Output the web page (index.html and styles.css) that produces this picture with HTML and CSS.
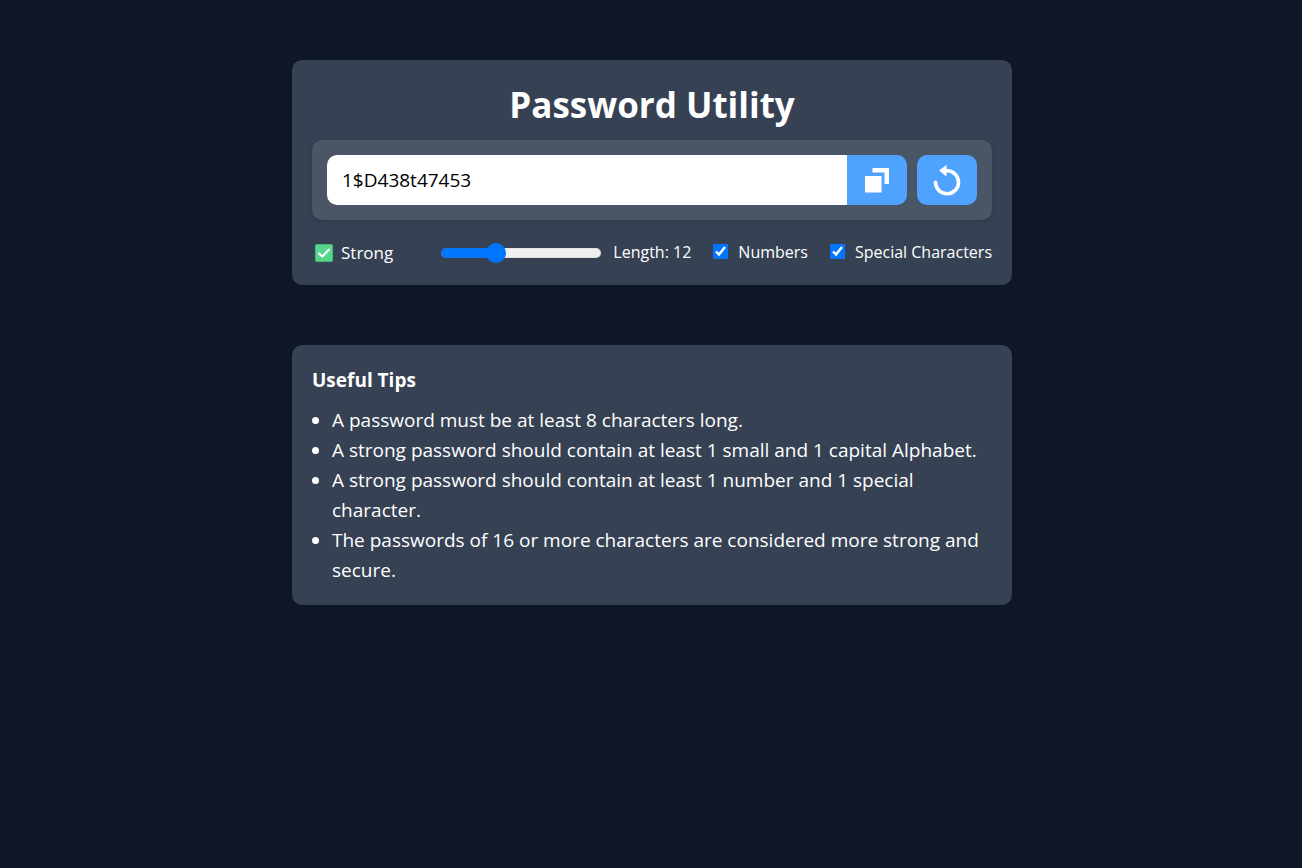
FILE: index.html
```html
<!DOCTYPE html>
<html lang="en">
<head>
<meta charset="utf-8">
<meta name="viewport" content="width=device-width, initial-scale=1">
<title>Password Utility</title>
<link rel="stylesheet" href="styles.css">
</head>
<body>
<main class="page">
  <section class="card">
    <h1 class="title">Password Utility</h1>
    <div class="panel">
      <input class="password" type="text" value="1$D438t47453" aria-label="Password">
      <button class="btn btn-copy" type="button" aria-label="Copy">
        <svg width="26" height="26" viewBox="0 0 26 26" fill="#fff" aria-hidden="true"><path d="M1 9h16.500v16.500H1zM8.500 1H25v16h-4.500V5.500h-12z"/></svg>
      </button>
      <button class="btn btn-refresh" type="button" aria-label="Generate">
        <svg width="30" height="32" viewBox="0 0 30 32" aria-hidden="true"><path d="M14 6.800A11.500 11.500 0 1 1 3.500 18.300" fill="none" stroke="#fff" stroke-width="3.600" stroke-linecap="round"/><path d="M7 6.500L14.500 1V12.500z" fill="#fff"/></svg>
      </button>
    </div>
    <div class="controls">
      <div class="strength">
        <svg class="tick" width="18" height="18" viewBox="0 0 18 18" aria-hidden="true"><rect x=".5" y=".5" width="17" height="17" rx="1" fill="#58d68d" stroke="#41b878"/><path d="M4 9.500L7.300 12.500L14 5.500" fill="none" stroke="#fff" stroke-width="2" stroke-linecap="round" stroke-linejoin="round"/></svg>
        <span>Strong</span>
      </div>
      <div class="options">
        <div class="option">
          <input class="slider" id="length" type="range" min="6" max="25" value="12">
          <label for="length">Length: 12</label>
        </div>
        <div class="option">
          <input class="check" id="numbers" type="checkbox" checked>
          <label for="numbers">Numbers</label>
        </div>
        <div class="option">
          <input class="check" id="special" type="checkbox" checked>
          <label for="special">Special Characters</label>
        </div>
      </div>
    </div>
  </section>
  <section class="card">
    <h2 class="subtitle">Useful Tips</h2>
    <ul class="tips">
      <li>A password must be at least 8 characters long.</li>
      <li>A strong password should contain at least 1 small and 1 capital Alphabet.</li>
      <li>A strong password should contain at least 1 number and 1 special character.</li>
      <li>The passwords of 16 or more characters are considered more strong and secure.</li>
    </ul>
  </section>
</main>
</body>
</html>
```
FILE: styles.css
```css
* { box-sizing: border-box; }
body {
  margin: 0;
  padding-left: 2px;
  background: #101828;
  color: #fff;
  font: 19px/30px "Segoe UI", "Open Sans", "Noto Sans", sans-serif;
}
.page {
  display: flex;
  flex-direction: column;
  gap: 60px;
  max-width: 720px;
  margin: 60px auto;
}
.card {
  padding: 20px;
  border-radius: 10px;
  background: #364153;
  box-shadow: 0 2px 6px rgba(0, 0, 0, .15);
}
.title {
  margin: 0 0 10px;
  font-size: 35px;
  line-height: 50px;
  text-align: center;
}
.panel {
  display: flex;
  padding: 15px;
  border-radius: 10px;
  background: #4a5565;
  box-shadow: 0 1px 4px rgba(0, 0, 0, .15);
}
.password {
  flex: 1;
  min-width: 0;
  height: 50px;
  padding: 0 15px;
  border: 0;
  border-radius: 10px 0 0 10px;
  background: #fff;
  color: #000;
  font: inherit;
}
.btn {
  display: flex;
  align-items: center;
  justify-content: center;
  width: 60px;
  height: 50px;
  padding: 0;
  border: 0;
  background: #50a2ff;
}
.btn-copy { border-radius: 0 10px 10px 0; }
.btn-refresh { margin-left: 10px; border-radius: 10px; }
.controls {
  display: flex;
  flex-wrap: wrap;
  justify-content: space-between;
  margin-top: 20px;
  line-height: 25px;
}
.strength {
  display: flex;
  align-items: center;
  gap: 8px;
  padding-left: 3px;
  font-size: 17px;
}
.options { display: flex; flex-wrap: wrap; gap: 22px; font-size: 16px; }
.option { display: flex; align-items: center; gap: 10px; }
.check {
  width: 15px;
  height: 15px;
  margin: 0 0 2px;
  accent-color: #0075ff;
}
.slider {
  appearance: none;
  width: 160px;
  height: 20px;
  margin: 0 2px 0 0;
  background: transparent;
}
.slider::-webkit-slider-runnable-track {
  height: 10px;
  border-radius: 5px;
  background: linear-gradient(to right, #0075ff 34%, #efefef 34%);
  box-shadow: inset 0 0 1px #767676;
}
.slider::-webkit-slider-thumb {
  appearance: none;
  width: 20px;
  height: 20px;
  margin-top: -5px;
  border-radius: 50%;
  background: #0075ff;
}
.subtitle { margin: 0 0 10px; font-size: 19px; line-height: 30px; }
.tips { margin: 0; padding-left: 20px; }
```
